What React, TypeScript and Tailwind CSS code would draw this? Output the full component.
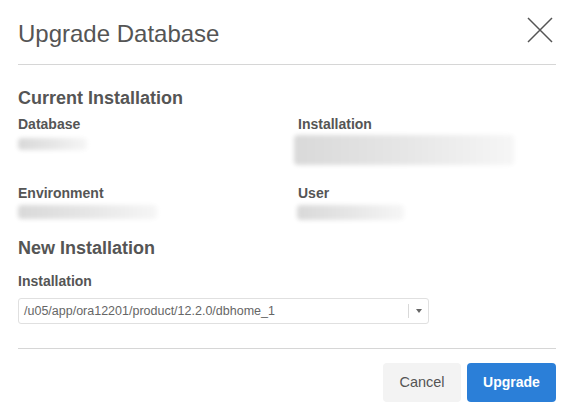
const font = { fontFamily: '"Liberation Sans", Arial, sans-serif' };

function Blur({ className }: { className: string }) {
  return <div className={`rounded-sm bg-gradient-to-r from-[#d9d9d9] via-[#e6e6e6] to-[#f6f6f6] blur-[2px] ${className}`} />;
}

export default function App() {
  return (
    <div className="w-[586px] h-[412px] bg-white pl-[18px] pr-[30px] text-[#555]" style={font}>
      {/* Header */}
      <div className="flex h-[65px] items-center justify-between border-b border-[#d6d6d6]">
        <h1 className="pt-[3px] text-[24px] leading-[28px] text-[#555]">Upgrade Database</h1>
        <svg width="26" height="26" viewBox="0 0 26 26" className="mr-[3px] mt-[-4px] text-[#555]">
          <path d="M1 1 L25 25 M25 1 L1 25" stroke="currentColor" strokeWidth="1.5" />
        </svg>
      </div>

      {/* Body */}
      <div className="pt-[22px]">
        <h2 className="text-[18px] font-bold leading-[22px] text-[#555]">Current Installation</h2>
        <div className="mt-[7px] grid grid-cols-[280px_1fr]">
          <div className="h-[69px]">
            <div className="text-[14px] font-bold leading-[17px]">Database</div>
            <Blur className="mt-[5px] h-[12px] w-[69px]" />
          </div>
          <div className="h-[69px]">
            <div className="text-[14px] font-bold leading-[17px]">Installation</div>
            <Blur className="ml-[-4px] mt-[2px] h-[30px] w-[220px]" />
          </div>
          <div>
            <div className="text-[14px] font-bold leading-[17px]">Environment</div>
            <Blur className="mt-[3px] h-[14px] w-[139px]" />
          </div>
          <div>
            <div className="text-[14px] font-bold leading-[17px]">User</div>
            <Blur className="ml-[-1px] mt-[3px] h-[15px] w-[107px]" />
          </div>
        </div>

        <h2 className="mt-[17px] text-[18px] font-bold leading-[22px] text-[#555]">New Installation</h2>
        <div className="mt-[14px] text-[14px] font-bold leading-[17px]">Installation</div>
        <div className="mt-[8px] flex h-[26px] w-[411px] items-center rounded-[3px] border border-[#e0e0e0] bg-white">
          <span className="flex-1 pl-[5px] text-[12.5px] text-[#666]">/u05/app/ora12201/product/12.2.0/dbhome_1</span>
          <div className="h-[14px] w-px bg-[#d9d9d9]" />
          <div className="flex w-[19px] justify-center">
            <svg width="6" height="4" viewBox="0 0 6 4"><path d="M0 0 H6 L3 4 Z" fill="#666" /></svg>
          </div>
        </div>
      </div>

      {/* Footer */}
      <div className="mt-[24px] flex justify-end gap-[6px] border-t border-[#d6d6d6] pt-[14px]">
        <button className="h-[39px] w-[78px] rounded-[4px] bg-[#f3f3f3] text-[14.5px] text-[#555]">Cancel</button>
        <button className="h-[39px] w-[89px] rounded-[4px] bg-[#2b7fd8] text-[14px] font-bold text-white">Upgrade</button>
      </div>
    </div>
  );
}
